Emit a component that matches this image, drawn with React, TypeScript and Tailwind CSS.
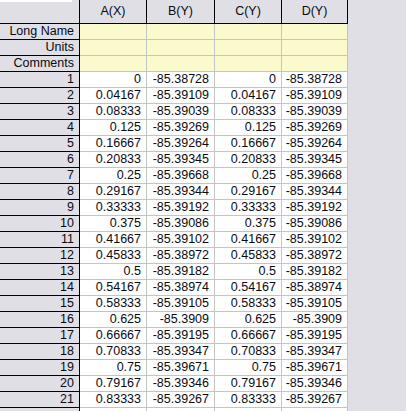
import React from 'react';

const cols = [
  { name: 'A(X)', w: 'w-[67px]' },
  { name: 'B(Y)', w: 'w-[68px]' },
  { name: 'C(Y)', w: 'w-[67px]' },
  { name: 'D(Y)', w: 'w-[66px]' },
];

const bValues = [
  '-85.38728', '-85.39109', '-85.39039', '-85.39269', '-85.39264', '-85.39345',
  '-85.39668', '-85.39344', '-85.39192', '-85.39086', '-85.39102', '-85.38972',
  '-85.39182', '-85.38974', '-85.39105', '-85.3909', '-85.39195', '-85.39347',
  '-85.39671', '-85.39346', '-85.39267',
];

function fmt(n: number) {
  if (n === 0) return '0';
  return String(Number(n.toFixed(5)));
}

const rows = bValues.map((b, i) => {
  const x = fmt(i / 24);
  return [x, b, x, b];
});

const labelRows = ['Long Name', 'Units', 'Comments'];

export default function App() {
  return (
    <div
      className="w-[406px] h-[411px] overflow-hidden bg-[#dfdfe5] text-[12.5px] text-[#0a0a14]"
      style={{ fontFamily: '"Liberation Sans", Arial, sans-serif' }}
    >
      {/* column headers */}
      <div className="flex h-[24px]">
        <div className="w-[80px] h-[24px] border-r border-b border-black bg-[#dfdfe5] flex flex-col">
          <div className="w-[72px] h-[2px] bg-white" />
        </div>
        {cols.map((c) => (
          <div
            key={c.name}
            className={`${c.w} h-[24px] border-r border-b border-black flex items-center justify-center pb-[1px]`}
          >
            {c.name}
          </div>
        ))}
      </div>

      {labelRows.map((l) => (
        <div key={l} className="flex h-[16px]">
          <div className="w-[80px] h-[16px] border-r border-b border-black text-right pr-[5px] leading-[15px]">
            {l}
          </div>
          {cols.map((c) => (
            <div
              key={c.name}
              className={`${c.w} h-[16px] bg-[#fafacd] border-r border-b border-[#c4c4c4]`}
            />
          ))}
        </div>
      ))}

      {rows.map((r, i) => (
        <div key={i} className="flex h-[16px]">
          <div className="w-[80px] h-[16px] border-r border-b border-black text-right pr-[5px] leading-[15px]">
            {i + 1}
          </div>
          {r.map((v, j) => (
            <div
              key={j}
              className={`${cols[j].w} h-[16px] bg-white border-r border-b border-[#c4c4c4] text-right pr-[5px] leading-[15px]`}
            >
              {v}
            </div>
          ))}
        </div>
      ))}

      {/* next row, cut off by the window edge */}
      <div className="flex h-[16px]">
        <div className="w-[80px] h-[16px] border-r border-black" />
        {cols.map((c) => (
          <div key={c.name} className={`${c.w} h-[16px] bg-white border-r border-[#c4c4c4]`} />
        ))}
      </div>
    </div>
  );
}
